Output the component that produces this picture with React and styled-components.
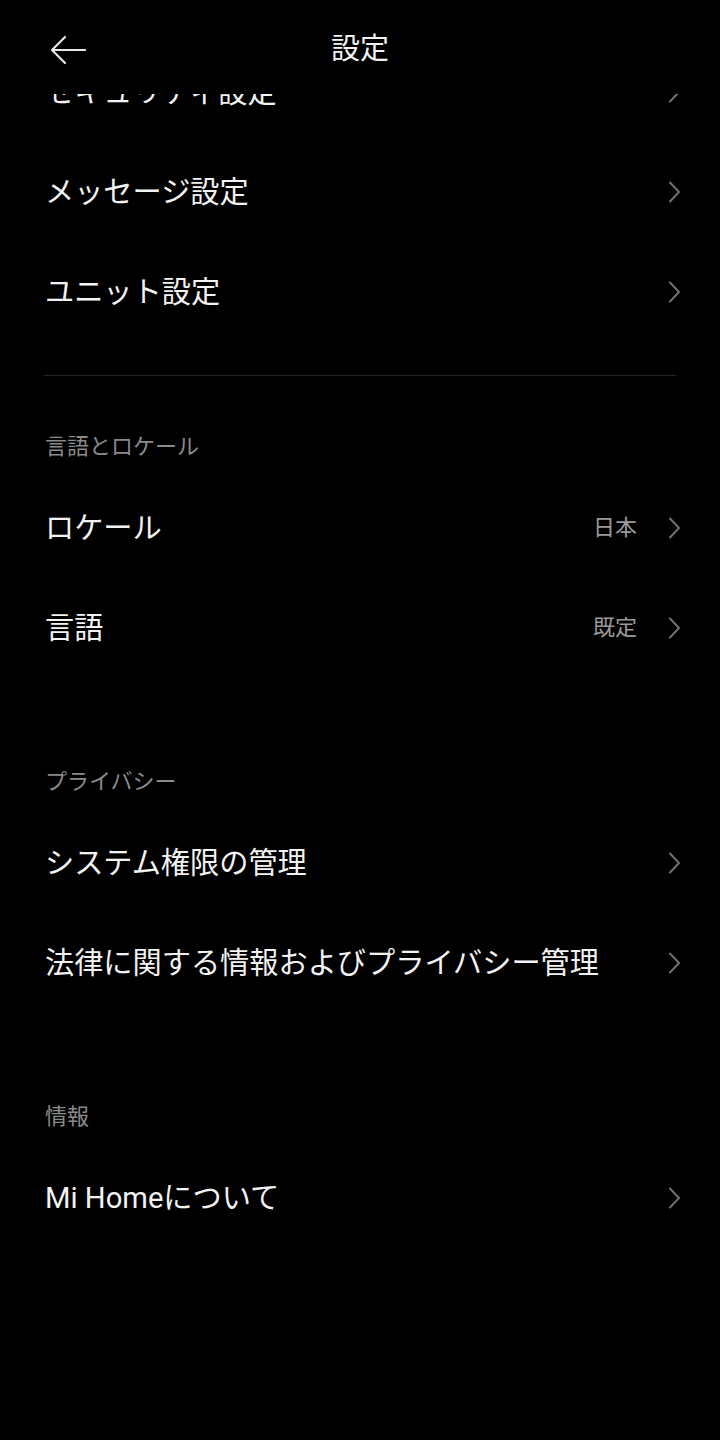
import React, { useLayoutEffect, useRef } from "react";
import styled, { createGlobalStyle } from "styled-components";

const COLOR = {
	Bg: "#000000",
	Text: "#f2f2f2",
	Muted: "#8a8a8a",
	Value: "#9a9a9a",
	Chevron: "#707070",
	Line: "#262626",
};

const FONT = `Roboto, "Noto Sans CJK JP", "Noto Sans", sans-serif`;

const Global = createGlobalStyle`
	html, body {
		margin: 0;
		padding: 0;
		background: ${COLOR.Bg};
	}
	* {
		box-sizing: border-box;
	}
`;

const Screen = styled.div`
	height: 100vh;
	overflow-y: auto;
	background: ${COLOR.Bg};
	font-family: ${FONT};
	color: ${COLOR.Text};
	scrollbar-width: none;
	&::-webkit-scrollbar {
		display: none;
	}
`;

const Header = styled.header`
	position: sticky;
	top: 0;
	z-index: 2;
	height: 94px;
	display: grid;
	grid-template-columns: 1fr auto 1fr;
	align-items: center;
	padding: 5px 44px 0;
	background: ${COLOR.Bg};
`;

const Back = styled.button`
	all: unset;
	justify-self: start;
	display: flex;
	align-items: center;
	padding-left: 6px;
	cursor: pointer;
`;

const Title = styled.h1`
	margin: 0;
	font-size: 29px;
	font-weight: 400;
	line-height: 1;
	color: ${COLOR.Text};
`;

const Content = styled.main`
	padding: 16px 0 240px;
`;

const Row = styled.div`
	height: 100px;
	display: flex;
	align-items: center;
	padding: 4px 40px 0 45px;
	cursor: pointer;
`;

const Label = styled.span`
	flex: 1;
	font-size: 29.2px;
	line-height: 34px;
	white-space: nowrap;
`;

const Value = styled.span`
	font-size: 22px;
	line-height: 30px;
	color: ${COLOR.Value};
	margin-right: 31px;
`;

const Divider = styled.hr`
	margin: 35px 44px 0;
	border: 0;
	height: 1px;
	background: ${COLOR.Line};
`;

const SectionTitle = styled.div`
	padding: ${(p) => p.$top}px 45px 14px;
	font-size: 22px;
	line-height: 30px;
	color: ${COLOR.Muted};
`;

const ArrowLeft = () => (
	<svg width="36" height="30" viewBox="0 0 36 30" fill="none">
		<path
			d="M35 15 H2 M15 2 L2 15 L15 28"
			stroke="#e8e8e8"
			strokeWidth="2.2"
			strokeLinecap="round"
			strokeLinejoin="round"
		/>
	</svg>
);

const Chevron = () => (
	<svg width="12" height="22" viewBox="0 0 12 22" fill="none">
		<path
			d="M2 1.5 L11 11 L2 20.5"
			stroke={COLOR.Chevron}
			strokeWidth="2"
			strokeLinecap="round"
			strokeLinejoin="round"
		/>
	</svg>
);

const Item = ({ label, value }) => (
	<Row>
		<Label>{label}</Label>
		{value && <Value>{value}</Value>}
		<Chevron />
	</Row>
);

const Section = ({ title, top, items }) => (
	<section>
		<SectionTitle $top={top}>{title}</SectionTitle>
		{items.map((it) => (
			<Item key={it.label} {...it} />
		))}
	</section>
);

const general = [
	{ label: "セキュリティ設定" },
	{ label: "メッセージ設定" },
	{ label: "ユニット設定" },
];

const sections = [
	{
		title: "言語とロケール",
		top: 56,
		items: [
			{ label: "ロケール", value: "日本" },
			{ label: "言語", value: "既定" },
		],
	},
	{
		title: "プライバシー",
		top: 91,
		items: [
			{ label: "システム権限の管理" },
			{ label: "法律に関する情報およびプライバシー管理" },
		],
	},
	{
		title: "情報",
		top: 91,
		items: [{ label: "Mi Homeについて" }],
	},
];

export default function App() {
	const ref = useRef(null);

	// the list is shown scrolled a little, first row tucked under the header
	useLayoutEffect(() => {
		if (ref.current) ref.current.scrollTop = 70;
	}, []);

	return (
		<>
			<Global />
			<Screen ref={ref}>
				<Header>
					<Back aria-label="戻る">
						<ArrowLeft />
					</Back>
					<Title>設定</Title>
					<span />
				</Header>
				<Content>
					{general.map((it) => (
						<Item key={it.label} {...it} />
					))}
					<Divider />
					{sections.map((s) => (
						<Section key={s.title} {...s} />
					))}
				</Content>
			</Screen>
		</>
	);
}
